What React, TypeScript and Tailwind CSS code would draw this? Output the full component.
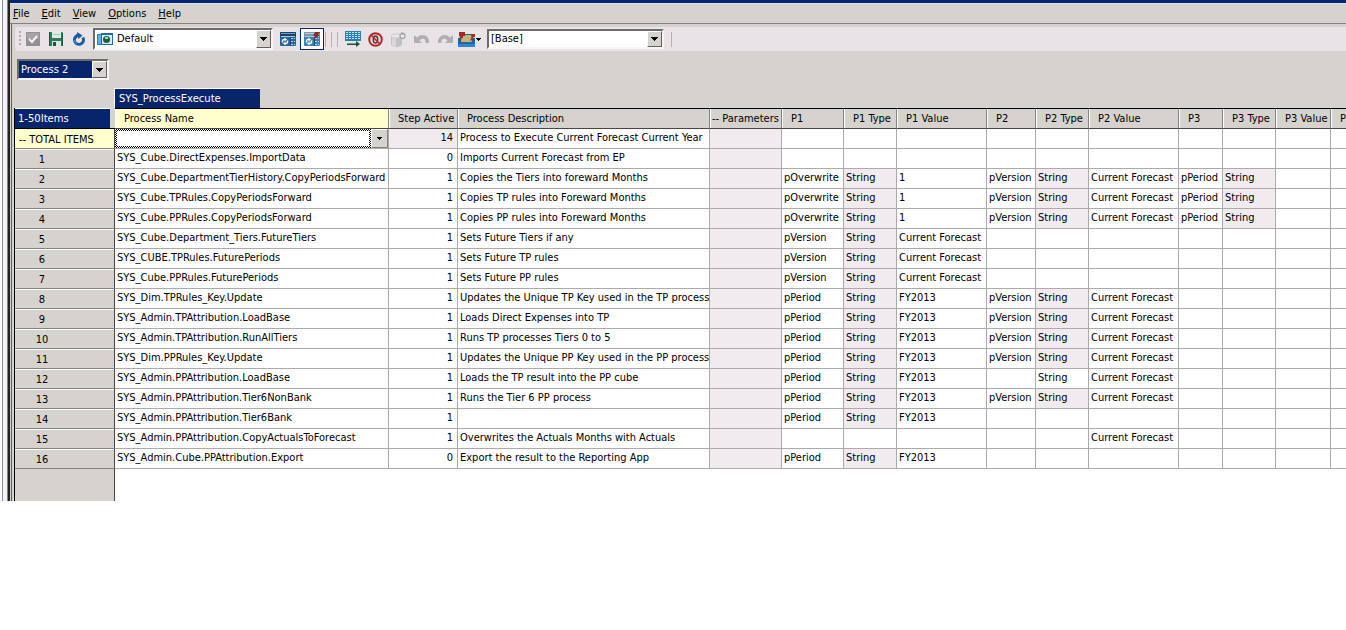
import React from 'react';
import clsx from 'clsx';

const menus = ['File', 'Edit', 'View', 'Options', 'Help'];

const columns = [
  { label: 'Process Name', width: 'w-[274px]' },
  { label: 'Step Active', width: 'w-[69px]' },
  { label: 'Process Description', width: 'w-[252px]' },
  { label: '-- Parameters', width: 'w-[72px]' },
  { label: 'P1', width: 'w-[62px]' },
  { label: 'P1 Type', width: 'w-[53px]' },
  { label: 'P1 Value', width: 'w-[90px]' },
  { label: 'P2', width: 'w-[49px]' },
  { label: 'P2 Type', width: 'w-[53px]' },
  { label: 'P2 Value', width: 'w-[90px]' },
  { label: 'P3', width: 'w-[44px]' },
  { label: 'P3 Type', width: 'w-[53px]' },
  { label: 'P3 Value', width: 'w-[55px]' },
  { label: 'P', width: 'w-auto' },
];

// name, active, description, then P1/type/value, P2/type/value, P3/type/value
const rows: string[][] = [
  ['', '14', 'Process to Execute Current Forecast Current Year'],
  ['SYS_Cube.DirectExpenses.ImportData', '0', 'Imports Current Forecast from EP'],
  ['SYS_Cube.DepartmentTierHistory.CopyPeriodsForward', '1', 'Copies the Tiers into foreward Months', 'pOverwrite', 'String', '1', 'pVersion', 'String', 'Current Forecast', 'pPeriod', 'String'],
  ['SYS_Cube.TPRules.CopyPeriodsForward', '1', 'Copies TP rules into Foreward Months', 'pOverwrite', 'String', '1', 'pVersion', 'String', 'Current Forecast', 'pPeriod', 'String'],
  ['SYS_Cube.PPRules.CopyPeriodsForward', '1', 'Copies PP rules into Foreward Months', 'pOverwrite', 'String', '1', 'pVersion', 'String', 'Current Forecast', 'pPeriod', 'String'],
  ['SYS_Cube.Department_Tiers.FutureTiers', '1', 'Sets Future Tiers if any', 'pVersion', 'String', 'Current Forecast'],
  ['SYS_CUBE.TPRules.FuturePeriods', '1', 'Sets Future TP rules', 'pVersion', 'String', 'Current Forecast'],
  ['SYS_Cube.PPRules.FuturePeriods', '1', 'Sets Future PP rules', 'pVersion', 'String', 'Current Forecast'],
  ['SYS_Dim.TPRules_Key.Update', '1', 'Updates the Unique TP Key used in the TP process', 'pPeriod', 'String', 'FY2013', 'pVersion', 'String', 'Current Forecast'],
  ['SYS_Admin.TPAttribution.LoadBase', '1', 'Loads Direct Expenses into TP', 'pPeriod', 'String', 'FY2013', 'pVersion', 'String', 'Current Forecast'],
  ['SYS_Admin.TPAttribution.RunAllTiers', '1', 'Runs TP processes Tiers 0 to 5', 'pPeriod', 'String', 'FY2013', 'pVersion', 'String', 'Current Forecast'],
  ['SYS_Dim.PPRules_Key.Update', '1', 'Updates the Unique PP Key used in the PP process', 'pPeriod', 'String', 'FY2013', 'pVersion', 'String', 'Current Forecast'],
  ['SYS_Admin.PPAttribution.LoadBase', '1', 'Loads the TP result into the PP cube', 'pPeriod', 'String', 'FY2013', '', 'String', 'Current Forecast'],
  ['SYS_Admin.PPAttribution.Tier6NonBank', '1', 'Runs the Tier 6 PP process', 'pPeriod', 'String', 'FY2013', 'pVersion', 'String', 'Current Forecast'],
  ['SYS_Admin.PPAttribution.Tier6Bank', '1', '', 'pPeriod', 'String', 'FY2013'],
  ['SYS_Admin.PPAttribution.CopyActualsToForecast', '1', 'Overwrites the Actuals Months with Actuals', '', '', '', '', '', 'Current Forecast'],
  ['SYS_Admin.Cube.PPAttribution.Export', '0', 'Export the result to the Reporting App', 'pPeriod', 'String', 'FY2013'],
];

// the Parameters column is always blank, so it is slotted in before P1
const cellsOf = (row: string[]) =>
  columns.map((_, i) => (i < 3 ? row[i] : i === 3 ? '' : row[i - 1]) ?? '');

// a type is locked only while its parameter has a name
const isLocked = (cells: string[], r: number, c: number) =>
  c === 3 || (c === 1 && r === 0) || ([5, 8, 11].includes(c) && cells[c] !== '' && cells[c - 1] !== '');

function Arrow({ className }: { className?: string }) {
  return (
    <svg viewBox="0 0 7 4" className={clsx('fill-black', className)} shapeRendering="crispEdges">
      <path d="M0 0h7v1H6v1H5v1H4v1H3V3H2V2H1V1H0z" />
    </svg>
  );
}

interface ComboProps {
  label: string;
  value: string;
  className: string;
  navy?: boolean;
  icon?: React.ReactNode;
}

function Combo({ label, value, className, navy, icon }: ComboProps) {
  return (
    <div className={clsx(
      'relative flex items-center border-2 border-t-[#6b6b6b] border-l-[#6b6b6b] border-r-[#f7f5f7] border-b-[#f7f5f7]',
      navy ? 'bg-[#08246b] text-white' : 'bg-white',
      className
    )}>
      {icon}
      <select
        aria-label={label}
        className={clsx(
          'h-full min-w-0 flex-1 appearance-none outline-none',
          navy && "font-['DejaVu_Sans',sans-serif] text-[10px]",
          icon ? 'pl-1' : 'pl-[2px]'
        )}
      >
        <option>{value}</option>
      </select>
      <span className="pointer-events-none absolute inset-y-0 right-0 flex w-[15px] items-center justify-center border border-t-white border-l-white border-r-[#63605f] border-b-[#63605f] bg-[#d6d3ce]">
        <Arrow className="h-1 w-[7px]" />
      </span>
    </div>
  );
}

function ToolButton({ label, className, children }: { label: string; className?: string; children: React.ReactNode }) {
  return (
    <button aria-label={label} className={clsx('flex h-[22px] shrink-0 items-center justify-center', className ?? 'w-[23px]')}>
      {children}
    </button>
  );
}

const Separator = ({ className }: { className?: string }) => (
  <span className={clsx('h-[15px] w-px shrink-0 bg-[#b5b2ad]', className)} />
);

const ViewIcon = () => (
  <svg viewBox="0 0 16 14" className="ml-[2px] h-[14px] w-4 shrink-0">
    <path d="M0 2h5v11H0z" fill="#2e7fc0" />
    <path d="M1 3h3v9H1z" fill="#63aee0" />
    <rect x="4" y="1" width="12" height="12" fill="#2168a8" />
    <rect x="5" y="3" width="10" height="9" fill="#dcebea" />
    <circle cx="9.500" cy="7.500" r="3.500" fill="#1b5c44" />
    <path d="M8 5h3v2H8z" fill="#a9d8bf" />
  </svg>
);

const CommitIcon = () => (
  <svg viewBox="0 0 14 14" className="size-[14px]">
    <rect width="14" height="14" fill="#929092" />
    <rect x="1" y="1" width="12" height="6" fill="#a5a3a5" />
    <path d="M3 7l3 3 5-6" fill="none" stroke="#f4f4f4" strokeWidth="2" />
  </svg>
);

const SaveIcon = () => (
  <svg viewBox="0 0 14 14" className="size-[14px]">
    <path d="M0 0h13l1 1v13H0z" fill="#2f7a5a" />
    <path d="M0 0h1v14H0zM13 1h1v13h-1z" fill="#1c5740" />
    <rect x="3" y="0" width="9" height="6" fill="#dcebe4" />
    <path d="M4 2.500h7" stroke="#a9c8b9" />
    <rect x="3" y="9" width="9" height="5" fill="#dfe6e2" />
    <rect x="4" y="10" width="3" height="4" fill="#1c5740" />
  </svg>
);

const RecalcIcon = () => (
  <svg viewBox="0 0 14 14" className="size-[14px]">
    <path d="M3.500 5A4.500 4.500 0 1 0 10.800 5.500" fill="none" stroke="#1f5c9c" strokeWidth="3" />
    <path d="M3 5.500L7 2" stroke="#1f5c9c" strokeWidth="3" />
    <path d="M5 0l5.500 3.500L6.500 7z" fill="#1f5c9c" />
    <path d="M2.500 8a4 4 0 0 0 2.500 3.500" fill="none" stroke="#5d9bd0" />
  </svg>
);

const CubeViewIcon = ({ bolt }: { bolt?: boolean }) => (
  <svg viewBox="0 0 16 14" className="h-[14px] w-4 shrink-0">
    <rect width="16" height="14" rx="1" fill={bolt ? '#3f80b4' : '#27649c'} />
    <rect x="0" y="0" width="16" height="5" rx="1" fill={bolt ? '#7c98ac' : '#1b4268'} />
    <rect x="1" y="1" width="14" height="1" fill={bolt ? '#c0ced8' : '#6f9cc0'} />
    <rect x="1" y="4" width="14" height="1" fill="#a9c9de" />
    <path d="M2.500 10.500V9A2 2 0 0 1 5 7.500M7.500 8.500V10A2 2 0 0 1 5 11.500" fill="none" stroke="#fff" strokeWidth="1.500" />
    <path d="M4.500 5.500v4l2.500-2zM5.500 9.500v4l-2.500-2z" fill="#fff" />
    <path d="M10 5h1v9h-1z" fill="#174a78" />
    <path d="M11 6h2v1h-2zM14 6h1v1h-1zM11 9h2v1h-2zM14 9h1v1h-1zM11 12h2v1h-2zM14 12h1v1h-1z" fill="#b5d4ea" />
    {bolt && <path d="M11 0h5l-2 3h2l-7 5 2-4H9z" fill="#8c2a22" />}
  </svg>
);

const GridArrowIcon = () => (
  <svg viewBox="0 0 16 16" className="size-4">
    <rect width="16" height="10" fill="#2b7fb4" />
    <path d="M1 1h2v1H1zM4 1h2v1H4zM7 1h2v1H7zM10 1h2v1h-2zM13 1h2v1h-2zM1 3h2v1H1zM4 3h2v1H4zM7 3h2v1H7zM10 3h2v1h-2zM13 3h2v1h-2zM1 5h2v1H1zM4 5h2v1H4zM7 5h2v1H7zM10 5h2v1h-2zM13 5h2v1h-2zM1 7h2v1H1zM4 7h2v1H4zM7 7h2v1H7zM10 7h2v1h-2zM13 7h2v1h-2z" fill="#c6e2f2" />
    <path d="M2 12.500h9V10l4 3-4 3v-2H2z" fill="#17562c" />
  </svg>
);

const SuppressIcon = () => (
  <svg viewBox="0 0 15 15" className="size-[15px]">
    <circle cx="7.500" cy="7.500" r="6.300" fill="#ead9d9" stroke="#b0282c" strokeWidth="2" />
    <ellipse cx="7.500" cy="7.500" rx="2.200" ry="3.500" fill="none" stroke="#54383a" strokeWidth="1.500" />
    <path d="M3 3l9 9" stroke="#b0282c" strokeWidth="1.500" />
  </svg>
);

const DatabaseIcon = () => (
  <svg viewBox="0 0 15 15" className="size-[15px]">
    <path d="M0 4v8c0 4 11 4 11 0V4z" fill="#c3c1c3" />
    <path d="M1 4v9c1 1 2 1.500 4 1.500V4z" fill="#d9d7d9" />
    <ellipse cx="5.500" cy="4" rx="5.500" ry="2" fill="#e9e8e9" stroke="#c9c7c9" />
    <circle cx="11.500" cy="4" r="2.500" fill="#eceaec" stroke="#a5a3a5" strokeWidth="1.300" />
    <path d="M10 0l3 1-2 2z" fill="#a5a3a5" />
  </svg>
);

const UndoIcon = ({ flip }: { flip?: boolean }) => (
  <svg viewBox="0 0 16 10" className={clsx('h-[10px] w-4', flip && '-scale-x-100')}>
    <path d="M0 1v8h8L5.500 6.500C8 3.500 12 4 11.500 9H15C16 2 8-2 3 3.500z" fill="#b0aeb0" />
  </svg>
);

const SandboxIcon = () => (
  <svg viewBox="0 0 17 15" className="h-[15px] w-[17px]">
    <path d="M0 6h17v9H0z" fill="#1d68a8" />
    <path d="M0 12h17v3H0z" fill="#2c86cc" />
    <path d="M2 2h13l1 8H1z" fill="#4a5a52" />
    <path d="M4 3h9l1 7H3z" fill="#c0b483" />
    <path d="M1 0h6v4H5v2H2V4H1z" fill="#9c2b2b" />
    <path d="M14 2h3v3h-2l-2 4-1-1 2-3z" fill="#a03028" />
  </svg>
);

function Toolbar() {
  return (
    <div className="ml-[3px] flex h-6 items-center overflow-hidden rounded-l bg-[#e7e3e7]">
      <span className="ml-1 h-4 w-[2px] shrink-0 bg-[repeating-linear-gradient(#b0adb0_0_2px,transparent_2px_4px)]" />
      <ToolButton label="Commit"><CommitIcon /></ToolButton>
      <ToolButton label="Save"><SaveIcon /></ToolButton>
      <ToolButton label="Recalculate"><RecalcIcon /></ToolButton>
      <Combo label="View" value="Default" className="ml-[3px] h-[22px] w-[180px] shrink-0" icon={<ViewIcon />} />
      <ToolButton label="Cube view" className="ml-[3px] w-6"><CubeViewIcon /></ToolButton>
      <ToolButton label="Automatic recalculate" className="w-6 border border-[#08246b] bg-white"><CubeViewIcon bolt /></ToolButton>
      <Separator className="ml-px" />
      <Separator className="ml-[5px]" />
      <Separator className="mr-[3px] ml-[5px]" />
      <ToolButton label="Swap rows"><GridArrowIcon /></ToolButton>
      <ToolButton label="Suppress zeros"><SuppressIcon /></ToolButton>
      <ToolButton label="Reload data"><DatabaseIcon /></ToolButton>
      <ToolButton label="Undo"><UndoIcon /></ToolButton>
      <ToolButton label="Redo"><UndoIcon flip /></ToolButton>
      <ToolButton label="Sandbox" className="w-[27px] gap-px">
        <SandboxIcon />
        <Arrow className="h-[3px] w-[5px]" />
      </ToolButton>
      <Combo label="Sandbox name" value="[Base]" className="mr-[7px] ml-1 h-5 w-[177px] shrink-0" />
      <Separator />
    </div>
  );
}

function NameEditor() {
  return (
    <div className="flex h-[19px]">
      <div className="min-w-0 flex-1 bg-[conic-gradient(#000_25%,#fff_0_50%,#000_0_75%,#fff_0)] bg-[length:2px_2px] p-[2px]">
        <select aria-label="Process name" className="block h-full w-full appearance-none bg-white outline-none">
          <option></option>
        </select>
      </div>
      <button aria-label="Pick process" className="flex w-[17px] items-center justify-center border border-t-white border-l-white border-r-[#84827f] border-b-[#84827f] bg-[#d6d3ce]">
        <Arrow className="h-[3px] w-[5px]" />
      </button>
    </div>
  );
}

function CubeGrid() {
  return (
    <table className="w-full min-w-[1331px] table-fixed border-separate border-spacing-0 bg-white">
      <colgroup>
        <col className="w-[100px]" />
        {columns.map((col) => <col key={col.label} className={col.width} />)}
      </colgroup>
      <thead>
        <tr className="h-[21px]">
          <th className="border-b border-black bg-[#d6d3ce] p-0 text-left font-['DejaVu_Sans',sans-serif] text-[10px] font-normal text-white">
            <div className="mr-[5px] h-5 border-t border-white bg-[#08246b] pl-[3px] leading-5">1-50Items</div>
          </th>
          {columns.map((col, c) => (
            <th
              key={col.label}
              className={clsx(
                'border-t border-r border-b border-t-black border-r-[#84827f] border-b-[#4a4545] p-0 text-left font-normal whitespace-nowrap last:border-r-0',
                c === 0 ? 'bg-[#ffffce]' : 'bg-[#d6d3ce]'
              )}
            >
              <div className={clsx('h-[19px] border-l border-white leading-[20px]', c === 3 ? 'pl-px' : 'pl-2')}>{col.label}</div>
            </th>
          ))}
        </tr>
      </thead>
      <tbody>
        {rows.map((row, r) => {
          const cells = cellsOf(row);
          return (
            <tr key={r} className="h-5">
              <th
                className={clsx(
                  'border-r border-b border-r-[#4a4545] border-b-[#84827f] p-0 font-normal whitespace-nowrap',
                  r === 0 ? 'bg-[#ffffce] text-left' : 'bg-[#d6d3ce] text-center'
                )}
              >
                <div className={clsx('h-[19px] border-t leading-[20px]', r === 0 ? 'border-[#ffffce] pl-1' : 'border-white pr-[45px]')}>
                  {r === 0 ? '-- TOTAL ITEMS' : r}
                </div>
              </th>
              {cells.map((cell, c) => (
                <td
                  key={c}
                  className={clsx(
                    'border-r border-b border-[#adaaad] p-0 whitespace-nowrap last:border-r-0',
                    isLocked(cells, r, c) && 'bg-[#efebef]'
                  )}
                >
                  {r === 0 && c === 0 ? (
                    <NameEditor />
                  ) : (
                    <div className={clsx('h-[19px] px-[2px] leading-[17px]', c === 1 && 'pr-1 text-right')}>{cell}</div>
                  )}
                </td>
              ))}
            </tr>
          );
        })}
      </tbody>
    </table>
  );
}

export default function App() {
  return (
    <div className="overflow-hidden bg-white font-['DejaVu_Sans_Condensed','DejaVu_Sans',sans-serif] text-[11px] text-black">
      <div className="ml-[2px] border-l border-[#8c8fa5] bg-[#f3f3f8] pl-1">
        <div className="border-l border-[#848284] bg-[#222]">
          <div className="ml-[2px] bg-[#d6d3ce]">
            <header>
              <div className="h-1 border-b border-[#dbe0ee] bg-[#08246b]" />
              <nav className="flex h-5 items-center gap-3 border-b border-[#84827f] pl-[3px]">
                {menus.map((m) => (
                  <button key={m} className="leading-4">
                    <span className="underline">{m[0]}</span>{m.slice(1)}
                  </button>
                ))}
              </nav>
            </header>

            <div className="ml-px border-l border-[#63605f] pt-[3px]">
              <Toolbar />

              <div className="mt-2 ml-[5px]">
                <Combo label="Process" value="Process 2" navy className="h-[21px] w-[92px]" />
              </div>

              <div className="mt-2 ml-[102px] h-5 w-[146px] border-t border-l border-white bg-[#08246b] pl-1 font-['DejaVu_Sans',sans-serif] text-[10px] leading-5 text-white">
                SYS_ProcessExecute
              </div>

              <main className="ml-[2px] border-l border-black">
                <CubeGrid />
                <div className="flex h-8">
                  <div className="w-[100px] border-r border-[#4a4545]" />
                  <div className="flex-1 bg-white" />
                </div>
              </main>
            </div>
          </div>
        </div>
      </div>
    </div>
  );
}
